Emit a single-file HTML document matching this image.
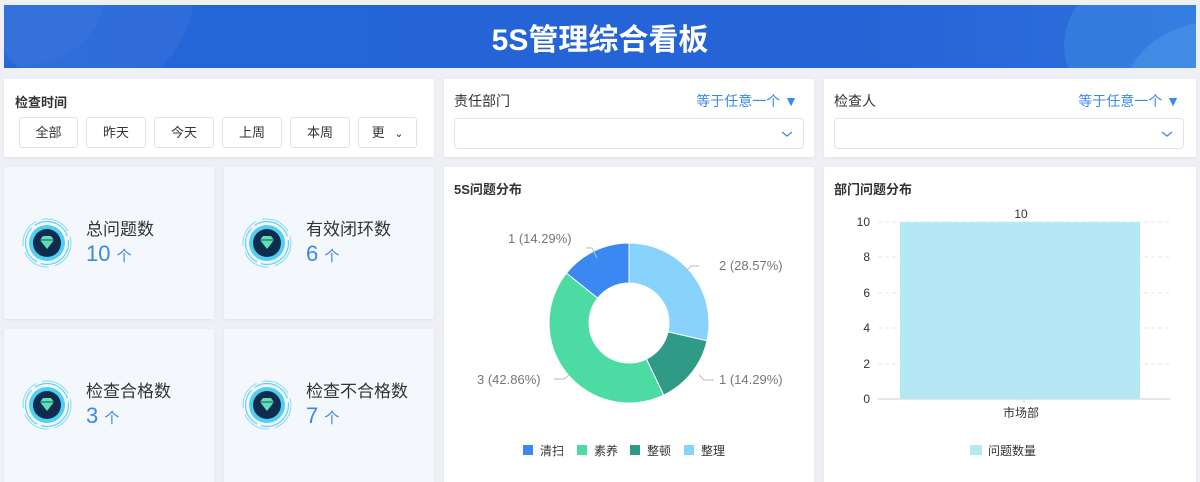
<!DOCTYPE html>
<html><head><meta charset="utf-8"><style>
*{margin:0;padding:0;box-sizing:border-box}
body{width:1200px;height:482px;background:#eef0f5;font-family:"Liberation Sans","Noto Sans CJK SC",sans-serif;position:relative;overflow:hidden;color:#333}
.abs{position:absolute}
.card{position:absolute;background:#fff;box-shadow:0 1px 3px rgba(0,0,0,.06)}
.hdr{left:4px;top:5px;width:1192px;height:63px;background:linear-gradient(90deg,#2466d8,#2563d6 70%,#2d6fdc);overflow:hidden}
.hdr h1{position:absolute;width:100%;text-align:center;top:10px;color:#fff;font-size:30px;font-weight:bold;letter-spacing:0}
.btn{position:absolute;top:117px;height:31px;border:1px solid #e3e3e3;border-radius:3px;font-size:13px;text-align:center;line-height:29px;color:#333}
.lbl{font-size:14px;color:#333}
.blue{color:#3a87f0;font-size:14px}
.sel{position:absolute;height:31px;border:1px solid #e3e3e3;border-radius:4px}
.stat{position:absolute;background:#f4f8fd;box-shadow:0 1px 3px rgba(0,0,0,.06)}
.stat .t{position:absolute;left:82px;top:48px;font-size:17px;color:#333}
.stat .v{position:absolute;left:82px;top:74px;font-size:22px;color:#3a87f0}
.stat .v span{font-size:15px}
.ico{position:absolute;left:17px;top:50px;width:52px;height:52px}
.ttl{position:absolute;left:10px;top:12px;font-size:13px;font-weight:bold;color:#333}
</style></head><body>
<div class="abs hdr">
<div class="abs" style="left:-20px;top:-120px;width:210px;height:210px;border-radius:50%;background:rgba(255,255,255,.05)"></div>
<div class="abs" style="left:-60px;top:-80px;width:160px;height:140px;border-radius:50%;background:rgba(255,255,255,.03)"></div>
<div class="abs" style="left:1060px;top:-50px;width:260px;height:180px;border-radius:50%;background:rgba(80,170,240,.25)"></div>
<div class="abs" style="left:1120px;top:15px;width:200px;height:150px;border-radius:50%;background:rgba(120,200,250,.2)"></div>
<h1>5S管理综合看板</h1></div>

<div class="card" style="left:4px;top:79px;width:430px;height:78px">
<div class="abs" style="left:11px;top:13px;font-size:13px;font-weight:bold">检查时间</div></div>
<div class="btn" style="left:19px;width:59px">全部</div>
<div class="btn" style="left:86px;width:60px">昨天</div>
<div class="btn" style="left:154px;width:60px">今天</div>
<div class="btn" style="left:222px;width:60px">上周</div>
<div class="btn" style="left:290px;width:60px">本周</div>
<div class="btn" style="left:358px;width:59px">更 <span style="font-size:11px;margin-left:6px">&#8964;</span></div>

<div class="card" style="left:444px;top:79px;width:370px;height:78px">
<div class="abs lbl" style="left:10px;top:12px">责任部门</div>
<div class="abs blue" style="right:16px;top:12px">等于任意一个 ▼</div>
<div class="sel" style="left:10px;top:39px;width:350px"><svg class="abs" style="right:10px;top:10px" width="12" height="10"><path d="M1 3l5 4 5-4" stroke="#3a87f0" fill="none" stroke-width="1.3"/></svg></div></div>
<div class="card" style="left:824px;top:79px;width:372px;height:78px">
<div class="abs lbl" style="left:10px;top:12px">检查人</div>
<div class="abs blue" style="right:16px;top:12px">等于任意一个 ▼</div>
<div class="sel" style="left:10px;top:39px;width:350px"><svg class="abs" style="right:10px;top:10px" width="12" height="10"><path d="M1 3l5 4 5-4" stroke="#3a87f0" fill="none" stroke-width="1.3"/></svg></div></div>

<svg width="0" height="0" style="position:absolute"><defs><symbol id="ic" viewBox="0 0 52 52">
<circle cx="26" cy="26" r="24" fill="none" stroke="#7fdcf5" stroke-width="1" stroke-dasharray="30 6"/>
<circle cx="26" cy="26" r="21.5" fill="none" stroke="#5fd2f3" stroke-width="1.2" stroke-dasharray="40 4"/>
<circle cx="26" cy="26" r="18" fill="#4fd0f3"/>
<circle cx="26" cy="26" r="14" fill="#0f2c4f"/>
<path d="M19 23l3-4h8l3 4-7 9z" fill="#5ee0b5"/><path d="M19 23h14" stroke="#0f2c4f" stroke-width=".8"/>
</symbol></defs></svg>
<div class="stat" style="left:4px;top:167px;width:210px;height:152px"><svg class="ico"><use href="#ic"/></svg><div class="t">总问题数</div><div class="v">10 <span>个</span></div></div>
<div class="stat" style="left:224px;top:167px;width:210px;height:152px"><svg class="ico"><use href="#ic"/></svg><div class="t">有效闭环数</div><div class="v">6 <span>个</span></div></div>
<div class="stat" style="left:4px;top:329px;width:210px;height:153px"><svg class="ico"><use href="#ic"/></svg><div class="t">检查合格数</div><div class="v">3 <span>个</span></div></div>
<div class="stat" style="left:224px;top:329px;width:210px;height:153px"><svg class="ico"><use href="#ic"/></svg><div class="t">检查不合格数</div><div class="v">7 <span>个</span></div></div>

<div class="card" style="left:444px;top:167px;width:370px;height:315px"><div class="ttl">5S问题分布</div>
<svg class="abs" style="left:0;top:0" width="370" height="315" font-family="Liberation Sans,Noto Sans CJK SC,sans-serif">
<g transform="translate(185,156)" stroke="#fff" stroke-width="1">
<path d="M0,-80A80,80 0 0 1 78,17.8L39,8.9A40,40 0 0 0 0,-40Z" fill="#87d3fd"/>
<path d="M78,17.8A80,80 0 0 1 34.7,72.1L17.4,36A40,40 0 0 0 39,8.9Z" fill="#2f9a86"/>
<path d="M34.7,72.1A80,80 0 0 1 -62.5,-49.9L-31.3,-24.9A40,40 0 0 0 17.4,36Z" fill="#4cdba2"/>
<path d="M-62.5,-49.9A80,80 0 0 1 0,-80L0,-40A40,40 0 0 0 -31.3,-24.9Z" fill="#3b88f2"/>
</g>
<g stroke="#bbb" fill="none"><path d="M142,81l6,0 5,10"/><path d="M255,99l-8,0-6,6"/><path d="M270,213l-10,0-5,-5"/><path d="M110,212l10,0 5,-4"/></g>
<g font-size="13" fill="#777"><text x="64" y="76">1 (14.29%)</text><text x="275" y="103">2 (28.57%)</text><text x="275" y="217">1 (14.29%)</text><text x="33" y="217">3 (42.86%)</text></g>
<g font-size="12" fill="#333"><rect x="79" y="278" width="10" height="10" fill="#3b88f2"/><text x="96" y="288">清扫</text>
<rect x="133" y="278" width="10" height="10" fill="#4cdba2"/><text x="150" y="288">素养</text>
<rect x="186" y="278" width="10" height="10" fill="#2f9a86"/><text x="203" y="288">整顿</text>
<rect x="240" y="278" width="10" height="10" fill="#87d3fd"/><text x="257" y="288">整理</text></g>
</svg></div>

<div class="card" style="left:824px;top:167px;width:372px;height:315px"><div class="ttl">部门问题分布</div>
<svg class="abs" style="left:0;top:0" width="372" height="315" font-family="Liberation Sans,Noto Sans CJK SC,sans-serif">
<g stroke="#e6e6e6" stroke-dasharray="4 3"><path d="M54,55H346M54,90H346M54,126H346M54,161H346M54,197H346"/></g>
<path d="M54,232H346" stroke="#ccc"/><path d="M200,232v4" stroke="#ccc"/>
<rect x="76" y="55" width="240" height="177" fill="#b3e8f4"/>
<g font-size="12" fill="#333" text-anchor="end"><text x="46" y="59">10</text><text x="46" y="94">8</text><text x="46" y="130">6</text><text x="46" y="165">4</text><text x="46" y="201">2</text><text x="46" y="236">0</text></g>
<text x="197" y="51" font-size="12" fill="#333" text-anchor="middle">10</text>
<text x="197" y="250" font-size="12" fill="#333" text-anchor="middle">市场部</text>
<rect x="146" y="278" width="12" height="10" fill="#b3e8f4"/><text x="164" y="288" font-size="12" fill="#333">问题数量</text>
</svg></div>
</body></html>
